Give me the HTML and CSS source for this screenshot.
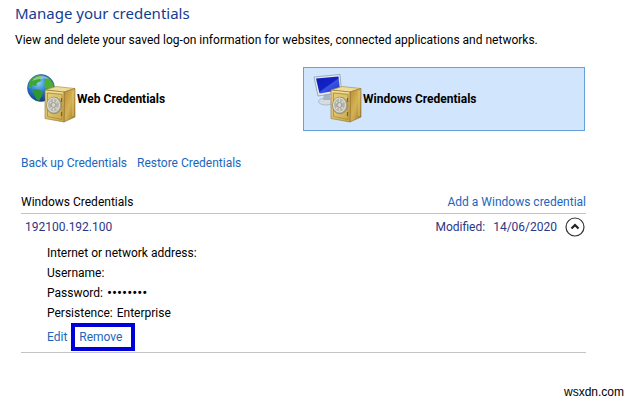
FILE: index.html
```html
<!DOCTYPE html>
<html lang="en">
<head>
  <meta charset="UTF-8">
  <meta name="viewport" content="width=device-width, initial-scale=1.0">
  <title>Credential Manager</title>
  <link rel="stylesheet" href="styles.css">
</head>
<body>
  <!-- Shared gradients and the safe -->
  <svg class="defs" width="0" height="0" aria-hidden="true">
    <defs>
      <radialGradient id="sea" cx="0.4" cy="0.3" r="0.7">
        <stop offset="0" stop-color="#8fd0f5"/>
        <stop offset="0.5" stop-color="#2b7fd0"/>
        <stop offset="1" stop-color="#0c3a8c"/>
      </radialGradient>
      <linearGradient id="screen" x1="0" y1="0" x2="1" y2="1">
        <stop offset="0" stop-color="#0a1fb0"/>
        <stop offset="0.5" stop-color="#1420c8"/>
        <stop offset="0.55" stop-color="#3a55e0"/>
        <stop offset="1" stop-color="#1a2fd0"/>
      </linearGradient>
      <linearGradient id="front" x1="0" y1="0" x2="1" y2="1">
        <stop offset="0" stop-color="#e6ce78"/>
        <stop offset="0.5" stop-color="#dcc26a"/>
        <stop offset="1" stop-color="#c8a344"/>
      </linearGradient>
      <linearGradient id="side" x1="0" y1="0" x2="1" y2="1">
        <stop offset="0" stop-color="#b58c34"/>
        <stop offset="0.5" stop-color="#d6b256"/>
        <stop offset="1" stop-color="#9c7828"/>
      </linearGradient>
      <g id="safe">
        <path d="M18 16 29 12.500 48 14.500 37 18Z" fill="#efdc98" stroke="#a5853c" stroke-width="0.6" stroke-linejoin="round"/>
        <path d="M37 18 48 14.500V43L37 48Z" fill="url(#side)" stroke="#8f7030" stroke-width="0.6" stroke-linejoin="round"/>
        <path d="M46 17V42" stroke="#e3c66c" stroke-width="1"/>
        <path d="M18 16 37 18V48L18 44.500Z" fill="url(#front)" stroke="#8f7030" stroke-width="0.6" stroke-linejoin="round"/>
        <path d="M20.500 19 35 20.500V45.500L20.500 42.500Z" fill="none" stroke="#a98a3e" stroke-width="0.8"/>
        <path d="M19 17.300 36 19" stroke="#f8e9ae" stroke-width="0.8"/>
        <path d="M34.500 24V28M34.500 38V42" stroke="#7d6020" stroke-width="1.200"/>
        <ellipse cx="27" cy="31.500" rx="7.500" ry="8.400" fill="#a8a48c" stroke="#857f68" stroke-width="0.6"/>
        <ellipse cx="26.500" cy="31" rx="6" ry="7" fill="#b4b4aa" stroke="#dcdcd4" stroke-width="1.200"/>
        <path d="M23 28 30.500 35M30.500 27 23 35M26.500 25V37" stroke="#d8d8d0" stroke-width="1.200"/>
        <circle cx="26.500" cy="31" r="2.400" fill="#d8d8d2" stroke="#85857a" stroke-width="0.7"/>
      </g>
    </defs>
  </svg>

  <main class="page">
    <h1>Manage your credentials</h1>
    <p class="intro">View and delete your saved log-on information for websites, connected applications and networks.</p>

    <!-- Vault selection -->
    <div class="vaults">
      <button type="button" class="vault">
        <svg class="vault-icon" viewBox="0 0 50 50" aria-hidden="true">
          <circle cx="14" cy="14" r="13.500" fill="url(#sea)" stroke="#1c4f96" stroke-width="0.6"/>
          <path d="M2 9C4 4 9 1 14 1L16 3 13 5 14 7 10 9 9 12 6 11 4 14 1.500 14Z" fill="#3fa535"/>
          <path d="M18 3 23 5 26.500 10 27 15 23 16 18 14 17 9 19 7Z" fill="#4fae32"/>
          <path d="M8 15 13 16 16 19 14 23 12 27 9 25 7 20 5 17Z" fill="#2f9630"/>
          <path d="M5 7C8 2 17 0 22 5 17 4 10 5 5 7Z" fill="#fff" opacity="0.4"/>
          <use href="#safe"/>
        </svg>
        <span>Web Credentials</span>
      </button>
      <button type="button" class="vault selected">
        <svg class="vault-icon" viewBox="0 0 50 50" aria-hidden="true">
          <ellipse cx="13" cy="27.500" rx="7.500" ry="3.500" fill="#d5dbe2" stroke="#9da9b5" stroke-width="0.7"/>
          <path d="M11 20 17 20 17 26 10 26Z" fill="#a9b4c0"/>
          <path d="M1 3 27 0.500 28.500 18 5 22Z" fill="#e8edf2" stroke="#8f9baa" stroke-width="0.8" stroke-linejoin="round"/>
          <path d="M3 4.500 25.500 2.500 27 16 6.500 19.500Z" fill="url(#screen)"/>
          <use href="#safe"/>
        </svg>
        <span>Windows Credentials</span>
      </button>
    </div>

    <div class="content">
      <nav class="tasks">
        <a href="#">Back up Credentials</a>
        <a href="#">Restore Credentials</a>
      </nav>

      <!-- Saved credentials -->
      <section class="list">
        <div class="list-header">
          <h2>Windows Credentials</h2>
          <a href="#">Add a Windows credential</a>
        </div>
        <div class="entry">
          <span class="entry-name">192100.192.100</span>
          <span>Modified:</span>
          <span>14/06/2020</span>
          <button type="button" class="toggle" aria-label="Collapse" aria-expanded="true">
            <svg viewBox="0 0 20 20" aria-hidden="true">
              <circle cx="10" cy="10" r="9" fill="#fff" stroke="#333" stroke-width="1.200"/>
              <path d="M6.500 11.500 10 8 13.500 11.500" fill="none" stroke="#222" stroke-width="2.200"/>
            </svg>
          </button>
        </div>
        <dl class="details">
          <div><dt>Internet or network address:</dt><dd></dd></div>
          <div><dt>Username:</dt><dd></dd></div>
          <div><dt>Password:</dt><dd class="password">••••••••</dd></div>
          <div><dt>Persistence:</dt><dd>Enterprise</dd></div>
        </dl>
        <div class="actions">
          <a href="#">Edit</a>
          <a href="#" class="highlight">Remove</a>
        </div>
      </section>
    </div>

    <footer>wsxdn.com</footer>
  </main>
</body>
</html>
```
FILE: styles.css
```css
/* General Styles */
body {
  margin: 0;
  background-color: #ffffff;
  color: #000000;
  font-family: Roboto, "Open Sans", sans-serif;
  font-size: 12px;
  line-height: 20px;
}

a {
  color: #1a66bd;
  text-decoration: none;
}

button {
  font-family: inherit;
  cursor: pointer;
}

.defs {
  position: absolute;
}

.page {
  padding: 0 50px 0 15px;
}

h1 {
  margin: 0;
  color: #123c94;
  font-family: "Noto Sans", "Open Sans", sans-serif;
  font-size: 15px;
  font-weight: normal;
  line-height: 26px;
}

.intro {
  margin: 4px 0 17px;
}

/* Vault Tiles */
.vaults {
  display: grid;
  grid-template-columns: 1fr 1fr;
  gap: 4px;
  padding: 0 1px 0 2px;
}

.vault {
  display: flex;
  align-items: center;
  height: 64px;
  padding: 0 9px;
  background-color: transparent;
  border: 1px solid transparent;
  color: #000000;
  font-size: 12px;
  font-weight: bold;
}

.vault.selected {
  background-color: #d1e6fd;
  border-color: #66a1d8;
}

.vault-icon {
  width: 50px;
  height: 50px;
}

/* Content */
.content {
  padding-left: 6px;
}

.tasks {
  display: flex;
  gap: 10px;
  padding: 22px 0 19px;
}

.list {
  border-bottom: 1px solid #c4c4c4;
}

.list-header {
  display: flex;
  justify-content: space-between;
  padding-bottom: 1px;
  border-bottom: 1px solid #c4c4c4;
}

h2 {
  margin: 0;
  font-size: 12px;
  font-weight: normal;
}

.entry {
  display: flex;
  align-items: center;
  gap: 8px;
  padding: 3px 1px 6px 4px;
  color: #2b3786;
}

.entry-name {
  flex: 1;
}

.toggle {
  width: 20px;
  height: 20px;
  padding: 0;
  background: none;
  border: none;
}

.toggle svg {
  display: block;
}

/* Details */
.details {
  margin: 0;
  padding-left: 26px;
}

.details div {
  display: flex;
  gap: 4px;
}

.details dd {
  margin: 0;
}

.details .password {
  font-size: 15px;
}

.actions {
  display: flex;
  align-items: center;
  gap: 4px;
  padding: 0 0 1px 26px;
}

.highlight {
  padding: 0 9px 0 4px;
  border: 4px solid #0000d8;
}

footer {
  margin-right: -38px;
  padding-top: 29px;
  font-family: "Liberation Sans", Arial, sans-serif;
  font-size: 12px;
  text-align: right;
}
```
